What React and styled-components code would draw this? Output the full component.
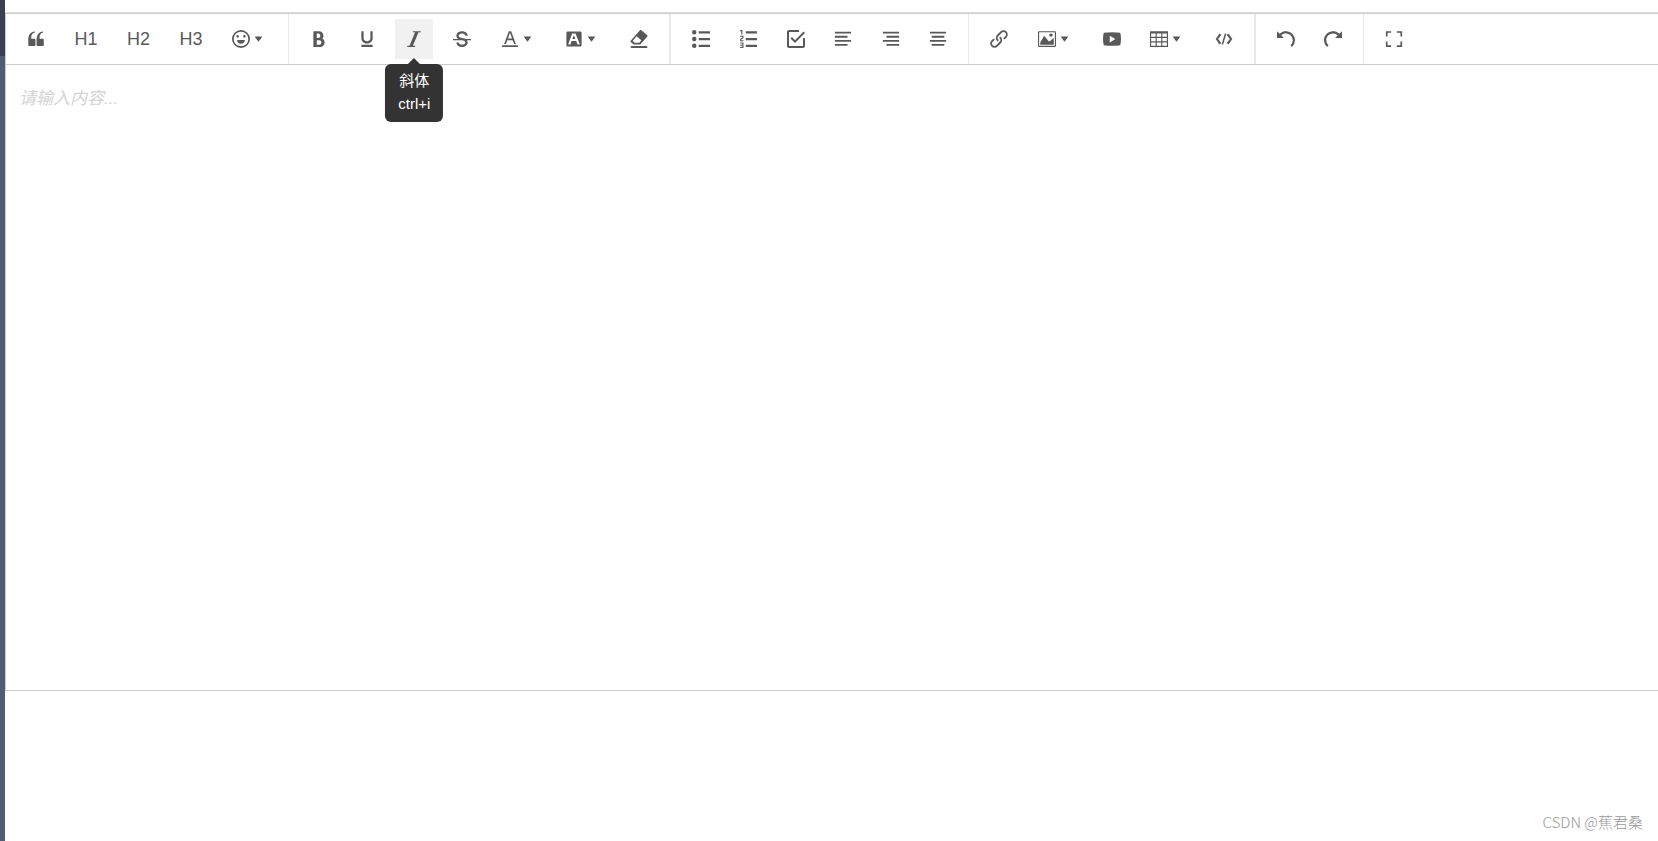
import React from "react";
import styled, { createGlobalStyle } from "styled-components";

const GlobalStyle = createGlobalStyle`
  * {
    box-sizing: border-box;
  }

  body {
    margin: 0;
    background: #fff;
    font-family: "Liberation Sans", "Noto Sans CJK SC", sans-serif;
  }
`;

const Page = styled.div`
  display: flex;
  min-height: 100vh;
`;

const Sidebar = styled.aside`
  flex: none;
  width: 5px;
  background: linear-gradient(#3a3f54 56px, #535c75 56px);
`;

const Main = styled.main`
  flex: 1;
  min-width: 0;
  display: flex;
  flex-direction: column;
  padding: 12px 0 150px;
  overflow: hidden;
`;

const Editor = styled.section`
  flex: 1;
  display: flex;
  flex-direction: column;
  border-top: 1px solid #ddd;
  border-bottom: 1px solid #ccc;
`;

const Toolbar = styled.div`
  display: flex;
  height: 52px;
  border: 1px solid #ccc;
  border-right: none;
`;

const Group = styled.div`
  flex: none;
  display: flex;
  align-items: center;
  justify-content: space-between;
  width: ${(props) => props.$width}px;
  padding: 0 11px;
  border-right: ${(props) => props.$line}px solid #e8e8e8;
`;

const ToolButton = styled.button`
  position: relative;
  display: flex;
  align-items: center;
  justify-content: center;
  height: 40px;
  padding: 0 10px;
  border: none;
  background: ${(props) => (props.$active ? "#f1f1f1" : "transparent")};
  color: #595959;
  font-family: inherit;
  font-size: 18px;
  cursor: pointer;

  &:hover {
    background: #f1f1f1;
  }
`;

const Icon = styled.svg`
  flex: none;
  width: ${(props) => props.$size}px;
  height: 18px;
  fill: currentColor;
`;

const Tooltip = styled.span`
  position: absolute;
  top: 45px;
  left: 50%;
  z-index: 1;
  transform: translateX(-50%);
  padding: 5px 13px 7px;
  border-radius: 6px;
  background: #333;
  color: #fff;
  font-size: 15px;
  line-height: 23px;
  white-space: pre;
  text-align: center;

  &::before {
    content: "";
    position: absolute;
    bottom: 100%;
    left: 50%;
    transform: translateX(-50%);
    border: 6px solid transparent;
    border-top: none;
    border-bottom-color: #333;
  }
`;

const Content = styled.textarea`
  flex: 1;
  padding: 20px 13px;
  border: none;
  border-left: 1px solid #ccc;
  outline: none;
  resize: none;
  font-family: inherit;
  font-size: 17px;
  line-height: 28px;

  &::placeholder {
    color: #d4d4d4;
    font-style: italic;
  }
`;

const Watermark = styled.span`
  position: absolute;
  right: 15px;
  bottom: 8px;
  color: #999;
  font-family: "Noto Sans CJK SC", sans-serif;
  font-weight: 300;
  font-size: 15px;
  line-height: 22px;
`;

const paths = {
  quote:
    "M894.6 907.1H605.4c-32.6 0-59-26.4-59-59V608.2l-4-14.9c0-315.9 125.5-485.1 376.5-507.5v59.8C752.7 180.4 711.3 315.8 711.3 442.4v41.2l31.5 12.3h151.8c32.6 0 59 26.4 59 59v293.2c0 32.5-26.4 59-59 59z m-472 0H133.4c-32.6 0-59-26.4-59-59V608.2l-4-14.9c0-315.9 125.5-485.1 376.5-507.5v59.8C280.7 180.4 239.3 315.8 239.3 442.4v41.2l31.5 12.3h151.8c32.6 0 59 26.4 59 59v293.2c0 32.5-26.4 59-59 59z",
  emotion:
    "M512 0a512 512 0 1 0 0 1024a512 512 0 1 0 0-1024zM512 96a416 416 0 1 1 0 832a416 416 0 1 1 0-832zM320 290a72 72 0 1 0 0 144a72 72 0 1 0 0-144zM704 290a72 72 0 1 0 0 144a72 72 0 1 0 0-144zM290 570h444c0 120-90 210-222 210s-222-90-222-210z",
  bold: "M707.872 484.64A254.88 254.88 0 0 0 768 320c0-141.152-114.848-256-256-256H192v896h384c141.152 0 256-114.848 256-256a256.096 256.096 0 0 0-124.128-219.36zM384 192h101.504c55.968 0 101.504 57.408 101.504 128s-45.536 128-101.504 128H384V192z m159.008 640H384v-256h159.008c58.464 0 106.016 57.408 106.016 128s-47.552 128-106.016 128z",
  underline:
    "M704 64l128 0 0 416c0 159.072-143.264 288-320 288s-320-128.928-320-288l0-416 128 0 0 416c0 40.16 18.24 78.688 51.36 108.512 36.896 33.216 86.848 51.488 140.64 51.488s103.744-18.304 140.64-51.488c33.12-29.792 51.36-68.352 51.36-108.512l0-416zM192 832l640 0 0 128-640 0z",
  italic: "M896 64v64h-128L448 896h128v64H128v-64h128L576 128h-128V64z",
  through:
    "M1024 512v64h-234.496c27.52 38.496 42.496 82.688 42.496 128 0 70.88-36.672 139.04-100.576 186.976C672.064 935.488 594.144 960 512 960s-160.064-24.512-219.424-69.024C228.64 843.04 192 774.88 192 704h128c0 69.376 87.936 128 192 128s192-58.624 192-128-87.936-128-192-128H0v-64h299.52a385.984 385.984 0 0 1-6.944-5.024C228.64 459.04 192 390.88 192 320s36.672-139.04 100.576-186.976C351.936 88.512 429.856 64 512 64s160.064 24.512 219.424 69.024C795.328 180.96 832 249.12 832 320h-128c0-69.376-87.936-128-192-128s-192 58.624-192 128 87.936 128 192 128c78.976 0 154.048 22.688 212.448 64H1024z",
  color:
    "M64 864h896v96H64zM360.58 576h302.85l81.53 224h102.16L579.24 64H444.77L176.89 800h102.16l81.53-224zM512 159.96L628.49 480H395.52L512 159.96z",
  background:
    "M510.03 315.08l84.68 196.92h-177.23l76.8-196.92h15.75zM945.23 157.54v708.92c0 43.32-35.45 78.77-78.77 78.77H157.54c-43.32 0-78.77-35.45-78.77-78.77V157.54c0-43.32 35.45-78.77 78.77-78.77h708.92c43.32 0 78.77 35.45 78.77 78.77z m-108.31 643.94L600.62 216.62c-5.91-11.82-15.75-19.69-29.54-19.69h-139.82c-11.82 0-23.63 7.88-27.57 19.69l-216.61 584.86c-3.94 11.82 3.94 25.6 17.72 25.6h80.74c11.82 0 23.63-9.85 27.57-21.66l63.01-175.26h263.88l68.92 175.26c3.94 11.82 15.75 21.66 27.57 21.66h80.74c13.78 0 23.63-13.78 19.69-25.6z",
  eraser:
    "M969.38 288.74l-319.4-270.85a67.07 67.07 0 0 0-96.46 5.75l-505.93 574.92a68.35 68.35 0 0 0-17.89 47.91 74.1 74.1 0 0 0 24.28 47.91l156.5 132.23h373.06L975.13 383.28a67.07 67.07 0 0 0-5.75-94.54z m-440.13 433.75H264.46l-90.07-78.57c-5.75-5.75-12.14-12.14-12.14-17.89a36.41 36.41 0 0 1 5.75-24.27l210.81-240.83 265.1 228.69z m-439.5 180.78h843.22a60.05 60.05 0 1 1 0 120.73H89.75a60.05 60.05 0 1 1 0-120.73z",
  bullets:
    "M384 64h640v128H384V64z m0 384h640v128H384v-128z m0 384h640v128H384v-128zM0 128a128 128 0 1 1 256 0 128 128 0 0 1-256 0z m0 384a128 128 0 1 1 256 0 128 128 0 0 1-256 0z m0 384a128 128 0 1 1 256 0 128 128 0 0 1-256 0z",
  numbers:
    "M384 832h640v128H384z m0-384h640v128H384z m0-384h640v128H384zM192 0v256H128V64H64V0zM128 526.016v50.016h128v64H64v-146.016l128-60V384H64v-64h192v146.016zM256 704v320H64v-64h128v-64H64v-64h128v-64H64v-64z",
  todo: "M278.76 403.91l-79.65 79.65L455.11 739.56l568.89-568.89-79.64-79.65L455.11 580.27l-176.35-176.36zM910.22 910.22H113.78V113.78h568.89V0H113.78C51.2 0 0 51.2 0 113.78v796.44c0 62.58 51.2 113.78 113.78 113.78h796.44c62.58 0 113.78-51.2 113.78-113.78V455.11h-113.78v455.11z",
  left: "M768 793.6v102.4H51.2v-102.4h716.8z m204.8-230.4v102.4H51.2v-102.4h921.6z m-204.8-230.4v102.4H51.2v-102.4h716.8zM972.8 102.4v102.4H51.2V102.4h921.6z",
  right:
    "M972.8 793.6v102.4H256v-102.4h716.8z m0-230.4v102.4H51.2v-102.4h921.6z m0-230.4v102.4H256v-102.4h716.8zM972.8 102.4v102.4H51.2V102.4h921.6z",
  center:
    "M870.4 793.6v102.4H153.6v-102.4h716.8z m102.4-230.4v102.4H51.2v-102.4h921.6z m-102.4-230.4v102.4H153.6v-102.4h716.8zM972.8 102.4v102.4H51.2V102.4h921.6z",
  link: "M440.224 635.776a51.84 51.84 0 0 1-36.768-15.232c-95.136-95.136-95.136-249.92 0-345.056l192-192C641.536 37.408 702.816 12.032 768 12.032s126.432 25.376 172.544 71.456c95.136 95.136 95.136 249.92 0 345.056l-87.776 87.776a51.968 51.968 0 1 1-73.536-73.536l87.776-87.776a140.16 140.16 0 0 0 0-197.984c-26.432-26.432-61.6-40.992-99.008-40.992s-72.544 14.56-99.008 40.992l-192 192a140.16 140.16 0 0 0 0 197.984 51.968 51.968 0 0 1-36.768 88.768zM256 1012a242.4 242.4 0 0 1-172.544-71.456c-95.136-95.136-95.136-249.92 0-345.056l87.776-87.776a51.968 51.968 0 1 1 73.536 73.536l-87.776 87.776a140.16 140.16 0 0 0 0 197.984c26.432 26.432 61.6 40.992 99.008 40.992s72.544-14.56 99.008-40.992l192-192a140.16 140.16 0 0 0 0-197.984 51.968 51.968 0 1 1 73.536-73.536c95.136 95.136 95.136 249.92 0 345.056l-192 192A242.4 242.4 0 0 1 256 1012z",
  image:
    "M959.877 128l0.123 0.123v767.775l-0.123 0.122H64.102l-0.122-0.122V128.123l0.122-0.123h895.775zM960 64H64C28.795 64 0 92.795 0 128v768c0 35.205 28.795 64 64 64h896c35.205 0 64-28.795 64-64V128c0-35.205-28.795-64-64-64zM832 288.01c0 53.023-42.988 96.01-96.01 96.01s-96.01-42.987-96.01-96.01S682.967 192 735.99 192 832 234.988 832 288.01zM896 832H128V704l224.01-384 256 320h64l224.01-192z",
  video:
    "M981.184 160.096C837.568 139.456 678.848 128 512 128S186.432 139.456 42.816 160.096C15.296 267.808 0 386.848 0 512s15.264 244.16 42.816 351.904C186.464 884.544 345.152 896 512 896s325.568-11.456 469.184-32.096C1008.704 756.192 1024 637.152 1024 512s-15.264-244.16-42.816-351.904zM384 704V320l320 192-320 192z",
  table:
    "M0 64v896h1024V64H0z m384 576v-192h256v192h-256z m256 64v192h-256v-192h256z m0-512v192h-256V192h256zM320 192v192H64V192h256z m-256 256h256v192H64v-192z m640 0h256v192h-256v-192z m0-64V192h256v192h-256zM64 704h256v192H64v-192z m640 192v-192h256v192h-256z",
  code: "M256 200l100 90-180 222 180 222-100 90L40 512zM768 200l-100 90 180 222-180 222 100 90 216-312zM560 200h90L464 824h-90z",
  undo: "M512 64A510.272 510.272 0 0 0 149.984 213.984L0.032 64v384h384L240.512 304.48A382.784 382.784 0 0 1 512.032 192c212.064 0 384 171.936 384 384 0 114.688-50.304 217.632-130.016 288l84.672 96a510.72 510.72 0 0 0 173.344-384c0-282.784-229.216-512-512-512z",
  redo: "M0 576a510.72 510.72 0 0 0 173.344 384l84.672-96A383.136 383.136 0 0 1 128 576C128 363.936 299.936 192 512 192c106.048 0 202.048 42.976 271.52 112.48L640 448h384V64l-149.984 149.984A510.272 510.272 0 0 0 512 64C229.216 64 0 293.216 0 576z",
  full: "M50 64h300v96H146v204H50zM674 64h300v300h-96V160H674zM50 660h96v204h204v96H50zM878 660h96v300H674v-96h204z",
  caret:
    "M498.7 655.8l-197.6-268c-8.1-10.9-0.3-26.4 13.3-26.4h395.2c13.6 0 21.4 15.4 13.3 26.4l-197.6 268c-6.6 9-20 9-26.6 0z",
};

const groups = [
  {
    width: 283,
    line: 1,
    tools: [
      { icon: "quote", label: "引用" },
      { text: "H1" },
      { text: "H2" },
      { text: "H3" },
      { icon: "emotion", label: "表情", menu: true },
    ],
  },
  {
    width: 382,
    line: 2,
    tools: [
      { icon: "bold", label: "粗体" },
      { icon: "underline", label: "下划线" },
      { icon: "italic", label: "斜体", tip: "斜体\nctrl+i" },
      { icon: "through", label: "删除线" },
      { icon: "color", label: "文字颜色", menu: true },
      { icon: "background", label: "背景色", menu: true },
      { icon: "eraser", label: "清除格式" },
    ],
  },
  {
    width: 298,
    line: 1,
    tools: [
      { icon: "bullets", label: "无序列表" },
      { icon: "numbers", label: "有序列表" },
      { icon: "todo", label: "待办" },
      { icon: "left", label: "左对齐" },
      { icon: "right", label: "右对齐" },
      { icon: "center", label: "居中对齐" },
    ],
  },
  {
    width: 287,
    line: 2,
    tools: [
      { icon: "link", label: "插入链接" },
      { icon: "image", label: "图片", menu: true },
      { icon: "video", label: "插入视频" },
      { icon: "table", label: "表格", menu: true },
      { icon: "code", label: "代码块" },
    ],
  },
  {
    width: 108,
    line: 1,
    tools: [
      { icon: "undo", label: "撤销" },
      { icon: "redo", label: "重做" },
    ],
  },
  { width: 60, line: 0, tools: [{ icon: "full", label: "全屏" }] },
];

function Glyph({ name, size = 18 }) {
  return (
    <Icon viewBox="0 0 1024 1024" aria-hidden="true" $size={size}>
      <path d={paths[name]} fillRule={name === "emotion" ? "evenodd" : "nonzero"} />
    </Icon>
  );
}

function Tool({ icon, text, label, menu, tip }) {
  return (
    <ToolButton type="button" aria-label={label} $active={!!tip}>
      {icon ? <Glyph name={icon} /> : text}
      {menu && <Glyph name="caret" size={17} />}
      {tip && <Tooltip role="tooltip">{tip}</Tooltip>}
    </ToolButton>
  );
}

export default function App() {
  return (
    <>
      <GlobalStyle />
      <Page>
        <Sidebar />
        <Main>
          <Editor>
            <Toolbar role="toolbar">
              {groups.map((group, index) => (
                <Group key={index} $width={group.width} $line={group.line}>
                  {group.tools.map((tool) => (
                    <Tool key={tool.icon || tool.text} {...tool} />
                  ))}
                </Group>
              ))}
            </Toolbar>
            <Content aria-label="内容" placeholder="请输入内容..." />
          </Editor>
        </Main>
        <Watermark>CSDN @蕉君桑</Watermark>
      </Page>
    </>
  );
}
